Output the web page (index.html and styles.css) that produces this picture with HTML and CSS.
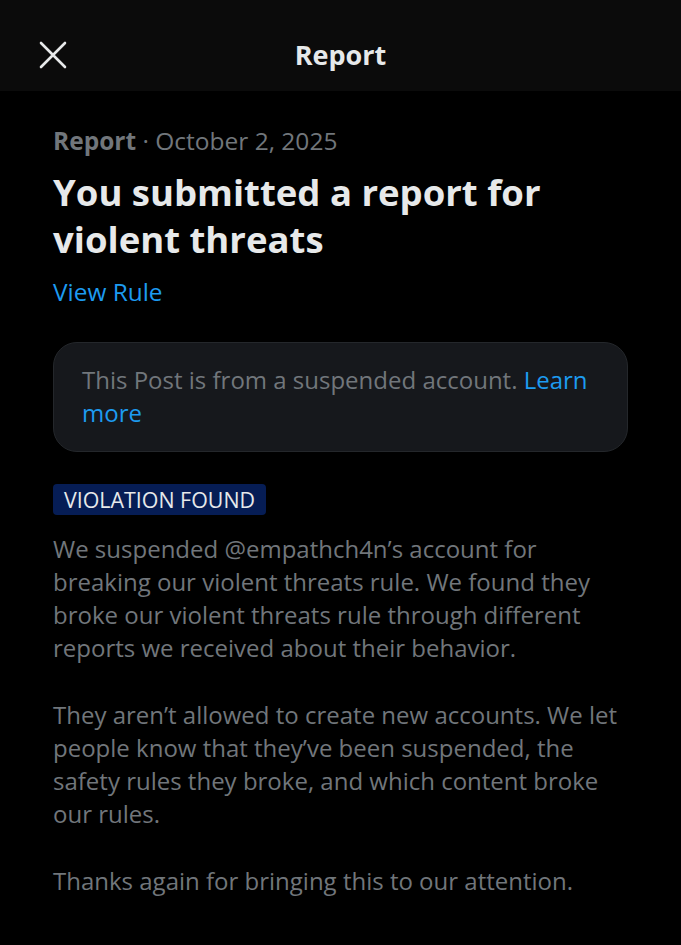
FILE: index.html
```html
<!DOCTYPE html>
<html>
<head>
<meta charset="utf-8">
<link rel="stylesheet" href="styles.css">
</head>
<body>
<div class="page">
  <header class="topbar">
    <svg class="close" width="28" height="28" viewBox="0 0 28 28"><path d="M2 2 L26 26 M26 2 L2 26" stroke="#e7e9ea" stroke-width="2.6" stroke-linecap="round"/></svg>
    <div class="title">Report</div>
  </header>
  <main class="content">
    <div class="meta"><span class="meta-strong">Report</span> · October 2, 2025</div>
    <h1 class="heading">You submitted a report for violent threats</h1>
    <a class="link rule-link">View Rule</a>
    <div class="card">This Post is from a suspended account. <a class="link">Learn more</a></div>
    <div class="badge">VIOLATION FOUND</div>
    <p class="para">We suspended @empathch4n’s account for breaking our violent threats rule. We found they broke our violent threats rule through different reports we received about their behavior.</p>
    <p class="para">They aren’t allowed to create new accounts. We let people know that they’ve been suspended, the safety rules they broke, and which content broke our rules.</p>
    <p class="para">Thanks again for bringing this to our attention.</p>
  </main>
</div>
</body>
</html>
```

FILE: styles.css
```css
html, body {
  margin: 0;
  padding: 0;
  background: #000;
}
body {
  font-family: "Open Sans", "Liberation Sans", sans-serif;
  color: #e7e9ea;
}
.page {
  width: 681px;
  min-height: 945px;
  background: #000;
}
.topbar {
  height: 91px;
  background: #0b0b0b;
  display: flex;
  align-items: center;
  justify-content: center;
  position: relative;
}
.close {
  position: absolute;
  left: 39px;
  top: 41px;
}
.title {
  font-size: 27px;
  font-weight: 700;
  color: #e7e9ea;
  margin-top: 18px;
}
.content {
  padding: 34px 53px 0 53px;
}
.meta {
  font-size: 24.5px;
  color: #71767b;
  line-height: 32px;
}
.meta-strong {
  font-weight: 700;
}
.heading {
  margin: 12px 0 0 0;
  font-size: 36.5px;
  line-height: 47px;
  font-weight: 700;
  color: #e7e9ea;
}
.link {
  color: #1d9bf0;
}
.rule-link {
  display: block;
  margin-top: 13px;
  font-size: 24.4px;
  line-height: 32px;
}
.card {
  margin-top: 34px;
  background: #16181c;
  border: 1px solid #24272b;
  border-radius: 24px;
  padding: 20px 28px 22px 28px;
  font-size: 24px;
  line-height: 33px;
  color: #71767b;
}
.badge {
  display: inline-block;
  margin-top: 32px;
  background: #061d55;
  color: #e7e9ea;
  font-size: 21.4px;
  line-height: 31px;
  padding: 0 11px;
  border-radius: 4px;
}
.para {
  margin: 17px 0 0 0;
  font-size: 24px;
  line-height: 33px;
  color: #71767b;
}
.para + .para {
  margin-top: 34px;
}
```
